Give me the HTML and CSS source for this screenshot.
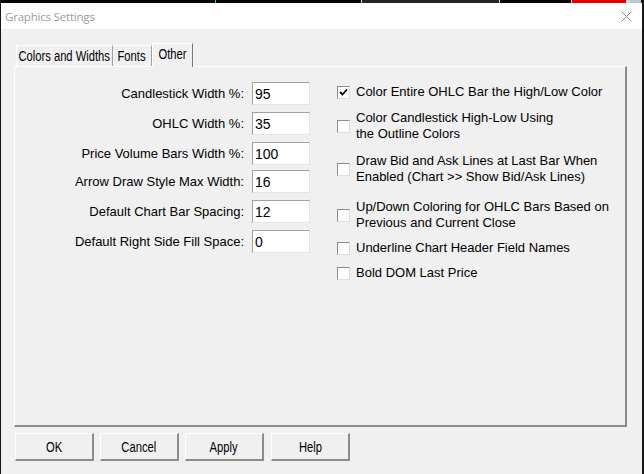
FILE: index.html
```html
<!DOCTYPE html>
<html lang="en">
<head>
  <meta charset="UTF-8">
  <title>Graphics Settings</title>
  <link rel="stylesheet" href="styles.css">
</head>
<body>
  <div class="backdrop">
    <span class="seg" style="width:214px"></span>
    <span class="seg cyan" style="width:1px"></span>
    <span class="seg" style="width:145px"></span>
    <span class="seg tick" style="width:1px"></span>
    <span class="seg dim" style="width:137px"></span>
    <span class="seg tick" style="width:1px"></span>
    <span class="seg" style="width:71px"></span>
    <span class="seg tick" style="width:1px"></span>
    <span class="seg red" style="width:54px"></span>
    <span class="seg tick" style="width:4px"></span>
    <span class="seg blue" style="width:11px"></span>
  </div>

  <div class="dialog">
    <div class="titlebar">
      <span class="title">Graphics Settings</span>
      <svg class="close" width="11" height="11" viewBox="0 0 11 11">
        <path d="M0.5 0.5 L10.5 10.5 M10.5 0.5 L0.5 10.5" stroke="#8a8a8a" stroke-width="1" fill="none"/>
      </svg>
    </div>

    <div class="content">
      <div class="tabs">
        <div class="tab t1"><span class="cond">Colors and Widths</span></div>
        <div class="tab t2"><span class="cond">Fonts</span></div>
        <div class="tab t3 active"><span class="cond">Other</span></div>
      </div>

      <div class="panel">
        <div class="fields">
          <label>Candlestick Width %:</label>
          <div class="edit">95</div>
          <label>OHLC Width %:</label>
          <div class="edit">35</div>
          <label>Price Volume Bars Width %:</label>
          <div class="edit">100</div>
          <label class="r4">Arrow Draw Style Max Width:</label>
          <div class="edit r4">16</div>
          <label>Default Chart Bar Spacing:</label>
          <div class="edit">12</div>
          <label>Default Right Side Fill Space:</label>
          <div class="edit">0</div>
        </div>

        <div class="checks">
          <div class="check">
            <span class="box">
              <svg width="9" height="9" viewBox="0 0 9 9"><path d="M1 4 L3.5 6.5 L8 1.5" stroke="#000" stroke-width="1.8" fill="none"/></svg>
            </span>
            <span>Color Entire OHLC Bar the High/Low Color</span>
          </div>
          <div class="check">
            <span class="box"></span>
            <span>Color Candlestick High-Low Using<br>the Outline Colors</span>
          </div>
          <div class="check">
            <span class="box"></span>
            <span>Draw Bid and Ask Lines at Last Bar When<br>Enabled (Chart &gt;&gt; Show Bid/Ask Lines)</span>
          </div>
          <div class="check loose">
            <span class="box"></span>
            <span>Up/Down Coloring for OHLC Bars Based on<br>Previous and Current Close</span>
          </div>
          <div class="check tight">
            <span class="box"></span>
            <span>Underline Chart Header Field Names</span>
          </div>
          <div class="check tight">
            <span class="box"></span>
            <span>Bold DOM Last Price</span>
          </div>
        </div>
      </div>

      <div class="buttons">
        <button><span class="cond">OK</span></button>
        <button><span class="cond">Cancel</span></button>
        <button><span class="cond">Apply</span></button>
        <button><span class="cond">Help</span></button>
      </div>
    </div>
  </div>
</body>
</html>
```

FILE: styles.css
```css
* { box-sizing: border-box; }
html, body { margin: 0; height: 100%; }
body { background: #161616; font-family: "Liberation Sans", Arial, sans-serif; font-size: 13px; color: #000; overflow: hidden; }

.backdrop { display: flex; height: 3px; padding-left: 1px; }
.seg { height: 3px; background: #050505; }
.seg.cyan { background: #3fc7d6; }
.seg.tick { background: #d8d8d8; }
.seg.dim { background: #262626; }
.seg.red { background: #e50000; }
.seg.blue { background: #b8c8dc; }

.dialog { margin: 0 2px 0 1px; height: 471px; background: #f0f0f0; display: flex; flex-direction: column; }

.titlebar { height: 26px; background: #fff; display: flex; align-items: center; justify-content: space-between; padding: 0 10px 0 4px; }
.title { font-family: "Open Sans", "Noto Sans", sans-serif; font-size: 11.5px; color: #9a9a9a; letter-spacing: -0.2px; }
.close { display: block; margin-top: 1px; }

/* tab and button captions use a narrow face */
.cond { display: inline-block; font-size: 14px; transform: scaleX(0.8); white-space: nowrap; }

.content { padding: 14px 0 0 13px; }

.tabs { display: flex; align-items: flex-end; height: 23px; padding-left: 2px; position: relative; z-index: 1; }
.tab { height: 21px; display: flex; justify-content: center; align-items: center; padding-bottom: 1px; border-top: 1px solid #fff; border-left: 1px solid #fff; border-right: 1px solid #a0a0a0; background: #f0f0f0; }
.tab + .tab { border-left: none; }
.tab.t1 { width: 97px; }
.tab.t2 { width: 39px; }
.tab.t3 { width: 41px; }
.tab.active { height: 24px; margin-bottom: -1px; padding-bottom: 4px; border-left: 1px solid #fff; border-right: 1px solid #7a7a7a; }

.panel { width: 613px; height: 361px; border-top: 1px solid #fff; border-left: 1px solid #fff; border-right: 2px solid #8c8c8c; border-bottom: 2px solid #8c8c8c; display: flex; padding-top: 15px; }

.fields { display: grid; grid-template-columns: 229px 58px; column-gap: 8px; row-gap: 7px; align-content: start; align-items: center; }
.fields label { text-align: right; }
.fields .r4 { margin-top: -2px; }
.edit { height: 23px; background: #fff; border-top: 1px solid #a0a0a0; border-left: 1px solid #a0a0a0; border-right: 1px solid #e3e3e3; border-bottom: 1px solid #e3e3e3; padding: 2px 0 0 2px; font-size: 14px; line-height: 18px; }

.checks { margin-left: 27px; padding-top: 2px; }
.check { display: flex; align-items: center; gap: 6px; line-height: 16px; margin-top: 11px; }
.check:first-child { margin-top: 0; }
.check:nth-child(2) { margin-top: 10px; }
.check.loose { margin-top: 14px; }
.check.tight { margin-top: 9px; }
.box { width: 13px; height: 13px; flex: none; background: #fff; border-top: 1px solid #8c8c8c; border-left: 1px solid #8c8c8c; border-right: 1px solid #dcdcdc; border-bottom: 1px solid #dcdcdc; display: flex; align-items: center; justify-content: center; }

.buttons { display: flex; gap: 6px; padding: 6px 0 0 1px; }
button { width: 79px; height: 28px; display: flex; align-items: center; justify-content: center; font-family: "Liberation Sans", Arial, sans-serif; color: #000; background: #f0f0f0; border-top: 1px solid #fff; border-left: 1px solid #fff; border-right: 2px solid #8c8c8c; border-bottom: 2px solid #8c8c8c; padding: 0; }
button:nth-child(4) { margin-left: 1px; }
```
